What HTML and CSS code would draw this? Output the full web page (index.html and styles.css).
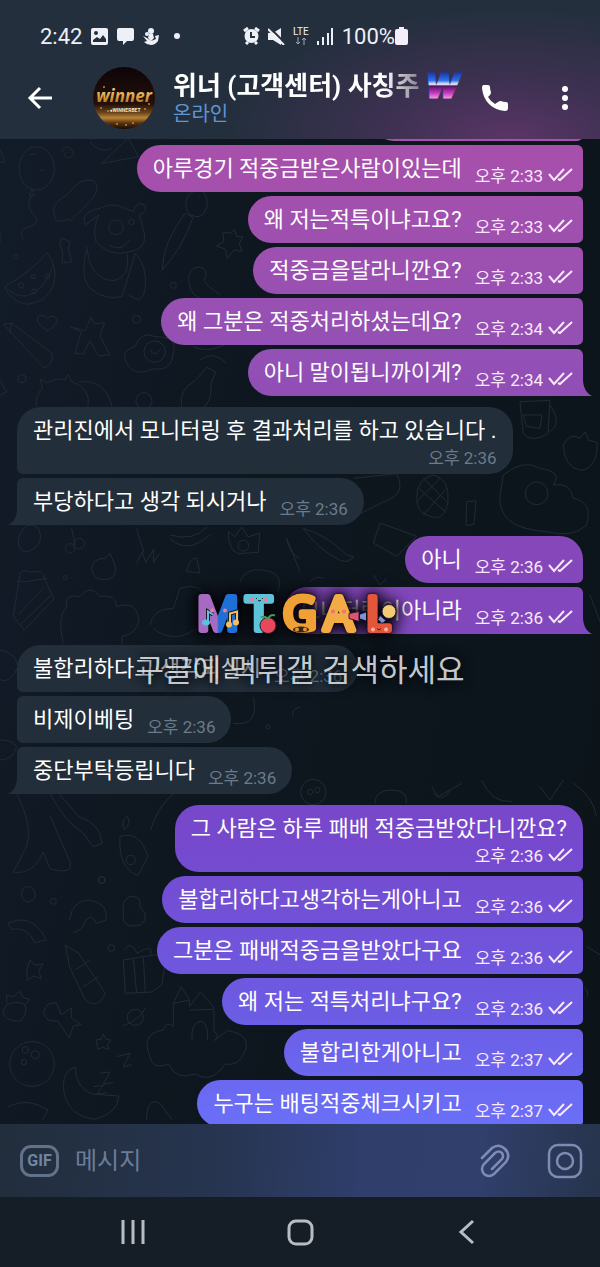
FILE: index.html
```
<!DOCTYPE html>
<html lang="ko">
<head>
  <meta charset="UTF-8" />
  <meta name="viewport" content="width=device-width, initial-scale=1" />
  <title>위너 (고객센터)</title>
  <link rel="stylesheet" href="styles.css">
</head>

<body>

<!-- Shared icons -->
<svg class="defs" width="0" height="0" aria-hidden="true">
  <symbol id="checks" viewBox="0 0 25 14">
    <path d="M1 6l5 6L16 1M10 11l2 1L24 1" fill="none" stroke="currentColor" stroke-width="2"/>
  </symbol>
</svg>

<div class="app">

  <header class="top">
    <div class="status-bar">
      <div class="status-left">
        <span class="clock">2:42</span>
        <svg width="17" height="17" viewBox="0 0 17 17"><path fill="#eef0f8" fill-rule="evenodd" d="M2 0h13q2 0 2 2v13q0 2-2 2H2q-2 0-2-2V2q0-2 2-2zM2 14h13v-3l-3-4-3 4-3-2-4 3zM5 3a2 2 0 100 4 2 2 0 000-4z"/></svg>
        <svg width="17" height="17" viewBox="0 0 17 17"><path fill="#eef0f8" d="M2 0h13q2 0 2 2v8q0 3-2 3h-5l-4 4v-4H2q-2 0-2-3V2q0-2 2-2z"/></svg>
        <svg width="16" height="17" viewBox="0 0 16 17"><g fill="#eef0f8"><circle cx="8" cy="3" r="3"/><path d="M6 6h4l1 4-3 3-3-3zM0 8l4 2 4 3 5-2-1-3 4-1-1 6q-3 4-7 4T1 14l3-1z"/><circle cx="4" cy="6" r="2"/></g></svg>
        <span class="dot"></span>
      </div>
      <div class="status-right">
        <svg width="17" height="18" viewBox="0 0 17 18"><circle cx="8.500" cy="9" r="7" fill="#eef0f8"/><path d="M1 4l4-3M16 4l-4-3M3 17l2-2M14 17l-2-2" stroke="#eef0f8" stroke-width="3"/><path d="M8 5v5h4" fill="none" stroke="#2b3040" stroke-width="2"/></svg>
        <svg width="17" height="17" viewBox="0 0 17 17"><path d="M0 5h5l8-5v17l-8-5H0z" fill="#eef0f8"/><path d="M1 -1l16 16" stroke="#2b3040" stroke-width="2"/><path d="M0 1l16 16" stroke="#eef0f8" stroke-width="2"/></svg>
        <span class="lte">LTE<svg width="12" height="8" viewBox="0 0 12 8"><path d="M3 0v7M1 5l2 2 2-2M9 8V1M7 3l2-2 2 2" fill="none" stroke="#a3a4b5"/></svg></span>
        <svg width="17" height="17" viewBox="0 0 17 17"><path d="M1 17v-4M6 17V9M11 17V5M15 17V0" stroke="#eef0f8" stroke-width="2"/></svg>
        <span class="battery">100%<svg width="13" height="18" viewBox="0 0 13 18"><path d="M4 0h5v2h2q2 0 2 2v12q0 2-2 2H2q-2 0-2-2V4q0-2 2-2h2z" fill="#f4eefb"/></svg></span>
      </div>
    </div>

    <div class="toolbar">
      <button class="icon-btn" aria-label="뒤로">
        <svg width="26" height="24" viewBox="0 0 26 24"><path d="M25 12H3M13 2L3 12l10 10" fill="none" stroke="#fff" stroke-width="3"/></svg>
      </button>
      <svg class="avatar" width="62" height="62" viewBox="0 0 62 62">
        <defs>
          <linearGradient id="gold" x1="0" y1="0" x2="0" y2="1"><stop offset="0" stop-color="#fff0b0"/><stop offset=".6" stop-color="#d99a3c"/><stop offset="1" stop-color="#8a5518"/></linearGradient>
          <linearGradient id="avatarBg" x1="0" y1="0" x2="0" y2="1"><stop offset="0" stop-color="#0d0407"/><stop offset=".6" stop-color="#24100a"/><stop offset=".74" stop-color="#6d461c"/><stop offset=".82" stop-color="#b98435"/><stop offset=".9" stop-color="#5a3512"/><stop offset="1" stop-color="#180b06"/></linearGradient>
        </defs>
        <circle cx="31" cy="31" r="31" fill="url(#avatarBg)"/>
        <g fill="#c08a3a"><circle cx="11" cy="20" r="1"/><circle cx="8" cy="41" r="1"/><circle cx="15" cy="44" r="1"/><circle cx="52" cy="42" r="1"/><circle cx="56" cy="37" r="1"/><circle cx="24" cy="57" r="1"/><circle cx="40" cy="56" r="1"/><circle cx="33" cy="58" r="1"/></g>
        <text x="31" y="35" text-anchor="middle" class="avatar-name" fill="url(#gold)">winner</text>
        <text x="32" y="45" text-anchor="middle" class="avatar-sub">●WINNERBET</text>
      </svg>
      <div class="peer">
        <div class="peer-line">
          <h1>위너 (고객센터) 사칭주</h1>
          <svg class="w-badge" width="36" height="28" viewBox="0 0 36 28">
            <defs><linearGradient id="chrome" x1="0" y1="0" x2="0" y2="28" gradientUnits="userSpaceOnUse"><stop offset="0" stop-color="#1733a8"/><stop offset=".3" stop-color="#2f6fe6"/><stop offset=".44" stop-color="#e9f3ff"/><stop offset=".5" stop-color="#571063"/><stop offset=".75" stop-color="#c43bc0"/><stop offset="1" stop-color="#ffb5ee"/></linearGradient></defs>
            <text x="0" y="25" class="w-letter" fill="url(#chrome)" stroke="url(#chrome)">W</text>
          </svg>
        </div>
        <p>온라인</p>
      </div>
      <button class="icon-btn call" aria-label="전화">
        <svg width="28" height="28" viewBox="0 0 28 28"><path d="M2 1h5q2 0 2 2 0 3 1 5 0 2-1 3l-2 2q3 5 7 7l3-2q1-1 3-1 2 1 5 1 2 0 2 2v4q0 3-3 3Q14 26 8 20T1 4q0-2 1-3z" fill="#fff"/></svg>
      </button>
      <button class="icon-btn" aria-label="더보기">
        <svg width="8" height="26" viewBox="0 0 8 26"><g fill="#fff"><circle cx="4" cy="4" r="3"/><circle cx="4" cy="13" r="3"/><circle cx="4" cy="22" r="3"/></g></svg>
      </button>
    </div>
  </header>

  <main class="chat">

    <!-- Wallpaper doodles -->
    <svg class="wallpaper" viewBox="0 139 600 985" preserveAspectRatio="xMidYMid slice" aria-hidden="true">
      <g transform="translate(0 130) scale(.3333)">
        <ellipse cx="110" cy="115" rx="53" ry="65"/><path d="M88 75q10-8 20 0M120 120q8 6 14-2M96 180l-8 16h16zM96 196q-22 30 5 58t-25 40q-18 10-8 32"/>
        <path d="M185 66q10-26 28-8t-10 26q-16-6-4-18M165 262q-20-40 40-70 36-52 76-40 24 20-6 56t-54 54l-10 12-4-6q-40 16-42-6z"/>
        <path d="M270 36q30 36 64 20M305 100l80-76 30 56q-50 10-110 20M300 235q36-20 76 0l24 10q10-34 34-20 10 20-16 30l16 60q4 40-42 50-64 18-104-30-10-40 8-80l-40 30q-14-26 16-42zM262 360q10 90 80 92 50-10 40-80M262 350q-26 100 14 130t90 20l40-130q36 40 30 100t-50 24"/>
        <circle cx="348" cy="292" r="22"/><circle cx="394" cy="276" r="8"/><path d="M330 346q30 22 60-16"/>
        <path d="M15 470Q100 420 140 368q36 40 20 100-20 50-80 55-50-10-65-53zM25 480q80 60 136-76M185 325l26 10-6 20 10 40-30 4 4-30-10-30z"/>
        <circle cx="64" cy="466" r="8"/><circle cx="100" cy="440" r="6"/><circle cx="142" cy="440" r="7"/><circle cx="102" cy="484" r="7"/><circle cx="48" cy="380" r="7"/>
        <path d="M560 240q-10-40 20-55 10-20 24-10 30 40 10 70-10 24-42 10zM555 250l24 12q-30 90-92 158 0-80 68-170zM690 310l14-12 6 22 18 0-10 22 8 22-24-4-20 26-6-28-26-10 22-14-4-28zM662 495q-40-26-50-44 14-20-4-38-30-10-42 26-2 50 34 66"/>
        <path d="M10 582l26-2 120 90q6 34-24 44zM36 580l-8 30M140 600q-36-20-26-40 14-10 28 4 20-14 30 6-4 20-32 34zM210 590l34 16-20 64 26 2 20-40 26 46 34-4-30-56 14-40-30 4-10-20-20 40z"/>
        <path d="M375 690q-10-30 30-40 20-50 60-30 70 0 55 46-4 60-60 50-60 30-85-26z"/><circle cx="464" cy="665" r="32"/><path d="M450 660q12 24 32-2"/>
        <path d="M108 830q0-40 20-56l-8-26 24 10q30-16 50-8l10-16 10 20q60 20 50 76M236 756q80-10 100 74M545 830q-10-50 40-78l36-40 26 14-14 34q4 60-30 78M580 650q40 20 90-4M600 690q40-30 80 10"/>
        <circle cx="410" cy="568" r="12"/><circle cx="66" cy="746" r="12"/><circle cx="520" cy="466" r="9"/><circle cx="432" cy="812" r="24"/><path d="M0 60l14 36H0M0 310v30M0 750l20 36-20 10"/>
      </g>
      <g transform="translate(0 395) scale(.3333)">
        <path d="M60 540q0-20 34-8 40-10 40 20l28 60-90 94-32-44zM50 560l30 0 60-10M54 660l76-80M64 686l90-86M190 745q-20-80 10-110-10-40 40-30 30-40 60 0 50-10 50 30 60-20 66 40-4 40-50 50v40"/>
        <path d="M275 520q4-30 40-30l16-14 8 20q20 40-10 56-50 10-54-32zM56 430q20-60 60-30 20 50-30 70-36 0-30-40zM215 400l10 50M410 400l22 74M410 506l16-34 12 30 24-40-2 40 18-26M510 420q70 20 110-24M510 430q50 50 120-10M685 410l20 16 20-30 20 30 34-12-4 58-60 4q-30-10-30-66zM860 430l40 100M860 430q10 50 40 60"/>
        <circle cx="210" cy="460" r="14"/><circle cx="238" cy="446" r="16"/><circle cx="196" cy="548" r="6"/><circle cx="730" cy="452" r="16"/><path d="M560 530q10-46 30-40l10 44zM450 690q10-50 70-50l20-60q60-20 80 30M460 700q60 50 130 0M720 560q20-50 90-30 40 10 24 60"/>
      </g>
      <g transform="translate(300 395) scale(.3333)">
        <path d="M660 20l90-4-6 100q-50 30-74 0zM670 60l56 0-6 40-40-6zM750 30q40 60-4 80M790 150q20-40 50-20l16-20 10 26 26 6q0 80-50 84-50-10-52-76zM350 310q0-60 50-70 50 10 44 80-10 60-54 44-40-10-40-54zM356 280l80 70M370 250l70 70M440 280l-70 80M420 250l-70 70M500 320l28-2-6 70-24 4z"/>
        <circle cx="710" cy="295" r="34"/><path d="M610 240q60-50 110-20 70 10 40 50 50-10 60 40 60 10 40 80-40 40-120 20-150-10-140-110zM240 384l110 40-60 60-70-40zM10 400q70 20 130 80l22 6-22 14-20-4Q50 460 10 400M160 250l130-14q30 60-30 80l-80 40"/>
        <path d="M220 540l20 30 20-20M870 600l30 80M30 560q20-20 40-10"/>
      </g>
      <g transform="translate(0 630) scale(.3333)">
        <path d="M0 60q50 10 54 50-20 50-54 40M50 490q50 100 30 160l-40 76q60 10 90-60l20 50q70 20 60-20l-60-140M150 490q40 80 100 120l30 40 26-10q-4-60-70-80l-60-70M360 620q60-20 84 60l-30 56q-60-20-54-116zM372 600q-10-30 10-40 14 20-10 40M452 600q20-70 70-110M700 280q80 10 60-80M880 260q-10-20 20-30M0 330q40 0 50 20-10 40-50 40"/>
        <circle cx="306" cy="750" r="10"/><circle cx="392" cy="690" r="14"/><circle cx="804" cy="290" r="6"/>
      </g>
      <g transform="translate(300 780) scale(.3333)">
        <circle cx="40" cy="36" r="38"/><circle cx="30" cy="36" r="8"/><circle cx="52" cy="30" r="8"/><path d="M225 70q0-40 50-40 50 0 44 40M395 20l20 30 70-40M400 40q30 30 50-10M545 0q30 70 90 64M720 20l30 40 40-60M820 10q60 40 70 100M860 500l40 24M850 620q20 20 10 30"/>
      </g>
      <g transform="translate(0 870) scale(.3333)">
        <path d="M106 72q-10-30-34-20-20 30 10 44 30-4 22-30M208 150q10-60 60-60 60 10 50 60l-30 10q-10-30-30-10-8 30-38 38M24 160q60-30 104 30l10 20-34 8q-20-50-70-40zM370 130q-6-40 20-50 36-4 30 30 30 30 4 54-60 16-54-34zM196 226l40 24 80 120q-20 50-60 20l-46-96zM226 300l44-30M250 350l46-30"/>
        <path d="M370 270l96-16 30 20-10 70-30 22-80 4zM400 264l10 106M430 262l6 106M372 240q20-30 40 10 50-30 40 4M80 300l10-30 14 16 26-4-14 20 8 24-22-8-20 12zM10 420q10-30 60-20 20 20-8 54-56 0-52-34zM20 400l0-24 20 4 20-16 10 20 18 4-14 20M130 430q10-40 40-30l14 34 30-20 0 30 30 20-24 4-12 36-34-50-30-4z"/>
        <circle cx="305" cy="30" r="10"/><circle cx="160" cy="94" r="9"/><circle cx="334" cy="234" r="10"/><circle cx="96" cy="582" r="67"/><circle cx="76" cy="540" r="10"/><circle cx="106" cy="554" r="12"/><circle cx="72" cy="576" r="8"/><circle cx="406" cy="442" r="24"/><path d="M370 468q50-20 66-54M288 510l16-2 6-16 8 16 14 2-10 14 4 14-18-6-14 6z"/>
        <path d="M450 560q-30-70 40-80 10-30 30-10l0-70 24-50 24 40v20l34-44 40 46v70q20 20 0 30l40-30q70 10 54 60-20 50-60 40-40 60-90 30-60 20-80-30-50 20-56-22zM520 400l48-10M570 420l70-2M576 510q-4-56 30-56 20 10 16 56"/>
        <path d="M190 650q0-50 36-58 0 60 50 80l80 6q0 50-70 70-90-10-96-98zM280 650l30-4-20 26 30-4M300 610l30-4-20 36 30-4M350 560l40-10-20 40 26-6M24 710q60-30 120 10l-16 30M440 750q0-70 40-50l36 50"/>
      </g>
    </svg>

    <div class="messages">
      <div class="bubble out stub"></div>
      <div class="bubble out"><p>아루경기 적중금받은사람이있는데</p><time>오후 2:33</time><svg class="ticks"><use href="#checks"/></svg></div>
      <div class="bubble out"><p>왜 저는적특이냐고요?</p><time>오후 2:33</time><svg class="ticks"><use href="#checks"/></svg></div>
      <div class="bubble out"><p>적중금을달라니깐요?</p><time>오후 2:33</time><svg class="ticks"><use href="#checks"/></svg></div>
      <div class="bubble out"><p>왜 그분은 적중처리하셨는데요?</p><time>오후 2:34</time><svg class="ticks"><use href="#checks"/></svg></div>
      <div class="bubble out last"><p>아니 말이됩니까이게?</p><time>오후 2:34</time><svg class="ticks"><use href="#checks"/></svg></div>

      <div class="bubble in first wide"><p>관리진에서 모니터링 후 결과처리를 하고 있습니다 .</p><time>오후 2:36</time></div>
      <div class="bubble in last"><p>부당하다고 생각 되시거나</p><time>오후 2:36</time></div>

      <div class="bubble out first"><p>아니</p><time>오후 2:36</time><svg class="ticks"><use href="#checks"/></svg></div>
      <div class="bubble out last"><p>모니터링이아니라</p><time>오후 2:36</time><svg class="ticks"><use href="#checks"/></svg></div>

      <div class="bubble in first"><p>불합리하다고 생각되실시</p><time>오후 2:36</time></div>
      <div class="bubble in"><p>비제이베팅</p><time>오후 2:36</time></div>
      <div class="bubble in last"><p>중단부탁등립니다</p><time>오후 2:36</time></div>

      <div class="bubble out first wide"><p>그 사람은 하루 패배 적중금받았다니깐요?</p><time>오후 2:36</time><svg class="ticks"><use href="#checks"/></svg></div>
      <div class="bubble out"><p>불합리하다고생각하는게아니고</p><time>오후 2:36</time><svg class="ticks"><use href="#checks"/></svg></div>
      <div class="bubble out"><p>그분은 패배적중금을받았다구요</p><time>오후 2:36</time><svg class="ticks"><use href="#checks"/></svg></div>
      <div class="bubble out"><p>왜 저는 적특처리냐구요?</p><time>오후 2:36</time><svg class="ticks"><use href="#checks"/></svg></div>
      <div class="bubble out"><p>불합리한게아니고</p><time>오후 2:37</time><svg class="ticks"><use href="#checks"/></svg></div>
      <div class="bubble out"><p>누구는 배팅적중체크시키고</p><time>오후 2:37</time><svg class="ticks"><use href="#checks"/></svg></div>
    </div>
  </main>

  <form class="composer">
    <button type="button" class="gif">GIF</button>
    <input type="text" placeholder="메시지" aria-label="메시지">
    <button type="button" class="icon-btn" aria-label="파일 첨부">
      <svg width="30" height="34" viewBox="0 0 30 34"><path d="M2 14L12 4q7-5 13 1 6 6 1 13L14 30q-5 4-10 0-4-5 0-10L15 9q4-3 7 0 2 3 0 6L12 25" fill="none" stroke="#7d8bb5" stroke-width="2.500" stroke-linecap="round"/></svg>
    </button>
    <button type="button" class="icon-btn" aria-label="카메라">
      <svg width="36" height="36" viewBox="0 0 36 36"><g fill="none" stroke="#7d8bb5" stroke-width="2.500"><rect x="2" y="2" width="32" height="32" rx="9"/><circle cx="18" cy="18" r="8"/></g></svg>
    </button>
  </form>

  <nav class="nav-bar">
    <button class="icon-btn" aria-label="최근 앱"><svg width="26" height="26" viewBox="0 0 26 26"><path d="M3 1v24M13 1v24M23 1v24" stroke="#b9bdc2" stroke-width="3"/></svg></button>
    <button class="icon-btn" aria-label="홈"><svg width="28" height="28" viewBox="0 0 28 28"><rect x="3" y="3" width="23" height="23" rx="7" fill="none" stroke="#b9bdc2" stroke-width="3"/></svg></button>
    <button class="icon-btn" aria-label="뒤로"><svg width="26" height="26" viewBox="0 0 26 26"><path d="M19 2L7 13l12 11" fill="none" stroke="#b9bdc2" stroke-width="3"/></svg></button>
  </nav>

  <!-- Watermark -->
  <div class="watermark">
    <svg class="wm-logo" width="210" height="54" viewBox="0 0 210 54">
      <defs><linearGradient id="mFill"><stop offset=".48" stop-color="#a66bc0"/><stop offset=".52" stop-color="#1e6fd6"/></linearGradient></defs>
      <g class="wm-letters">
        <text x="2" y="43" fill="url(#mFill)" stroke="url(#mFill)">M</text>
        <text x="51" y="43" fill="#5cc3d8" stroke="#5cc3d8">T</text>
        <text x="88" y="43" fill="#f0a136" stroke="#f0a136">G</text>
        <text x="129" y="43" fill="#f3ab45" stroke="#f3ab45">A</text>
        <text x="171" y="43" fill="#e3563c" stroke="#e3563c">L</text>
      </g>
      <path d="M13 36V25l5 3M35 38V27l7-2v11" fill="none" stroke="#16202b" stroke-width="4"/>
      <path d="M13 36V25l5 3" fill="none" stroke="#58c4dc" stroke-width="2"/><ellipse cx="11" cy="36" rx="4" ry="3" fill="#58c4dc"/>
      <path d="M35 37V27l7-2v10" fill="none" stroke="#f2c063" stroke-width="2"/><circle cx="34" cy="38" r="3" fill="#f2c063"/><circle cx="41" cy="36" r="3" fill="#f2c063"/>
      <circle cx="17" cy="24" r="2" fill="#f27a9c"/><circle cx="30" cy="24" r="2" fill="#f27a9c"/>
      <circle cx="57" cy="13" r="2" fill="#f27a9c"/><circle cx="71" cy="13" r="2" fill="#f27a9c"/><path d="M61 12h1M67 12h1M63 14q1 1 3 0" stroke="#26323c"/>
      <circle cx="73" cy="39" r="8" fill="#e9485c" stroke="#26202b"/><path d="M73 32q-4-3-7-1M73 32q3-5 7-3" stroke="#3f9b57" stroke-width="2" fill="none"/>
      <ellipse cx="106" cy="43" rx="8" ry="3" fill="#33271f"/><circle cx="102" cy="43" r="2" fill="#e09536"/><circle cx="110" cy="43" r="2" fill="#e09536"/>
      <circle cx="138" cy="25" r="2" fill="#ef6f7b"/><circle cx="149" cy="25" r="2" fill="#ef6f7b"/>
      <path d="M154 27l10-2v10l-10-3z" fill="#e2536c" stroke="#2b1c3a"/><path d="M165 28l6-2v8l-6-2z" fill="#8190dc"/>
      <circle cx="194" cy="25" r="7" fill="#f4ca72" stroke="#2b1c3a"/><path d="M185 29l6 5-4 3-4-4z" fill="#7f93cf" stroke="#2b1c3a"/>
      <circle cx="178" cy="43" r="2" fill="#ffb3a4"/><circle cx="191" cy="43" r="2" fill="#ffb3a4"/><path d="M182 42q2 3 4 0" stroke="#4a1a18" fill="none"/>
    </svg>
    <p>구글에 먹튀갤 검색하세요</p>
  </div>

</div>

</body>
</html>
```

FILE: styles.css
```
* {
  box-sizing: border-box;
}

body {
  margin: 0;
  background: #0e161d;
  color: #fff;
  font-family: Roboto, "Noto Sans CJK KR", sans-serif;
}

h1, p {
  margin: 0;
}

svg {
  display: block;
  flex: none;
}

.defs {
  position: absolute;
}

.app {
  position: relative;
  display: flex;
  flex-direction: column;
  height: 100vh;
  overflow: hidden;
}

button {
  background: none;
  border: none;
  padding: 0;
  color: inherit;
  font-family: inherit;
  cursor: pointer;
}

.icon-btn {
  display: flex;
  align-items: center;
  justify-content: center;
  flex: none;
}

/* --- HEADER --- */
.top {
  flex: none;
  padding-top: 16px;
  background:
    radial-gradient(ellipse 280px 130px at 85% 100%, #5a3567 0%, rgba(78, 50, 94, 0.6) 45%, rgba(36, 46, 61, 0) 100%),
    #242f3e;
}

.status-bar {
  display: flex;
  align-items: center;
  height: 40px;
  padding-left: 40px;
  font-size: 22px;
  color: #eef0f8;
}

.status-left,
.status-right {
  display: flex;
  align-items: center;
  gap: 9px;
}

.status-left {
  width: 203px;
}

.status-right {
  gap: 8px;
}

.dot {
  width: 6px;
  height: 6px;
  margin-left: 6px;
  border-radius: 50%;
  background: #eef0f8;
}

.lte {
  display: flex;
  flex-direction: column;
  align-items: center;
  font-size: 10px;
  line-height: 10px;
}

.battery {
  display: flex;
  align-items: center;
}

.toolbar {
  display: flex;
  align-items: center;
  height: 83px;
  padding: 0 31px 0 27px;
}

.avatar {
  margin: 0 18px 0 40px;
}

.avatar-name {
  font: italic 700 17px "Open Sans", sans-serif;
}

.avatar-sub {
  font: 700 5px Roboto, sans-serif;
  fill: #f3e2c0;
}

.peer {
  flex: 1;
  min-width: 0;
}

.peer-line {
  display: flex;
  align-items: center;
  gap: 8px;
}

.peer h1 {
  flex: none;
  font-size: 26px;
  line-height: 32px;
  font-weight: 700;
  white-space: nowrap;
  -webkit-mask-image: linear-gradient(to left, rgba(0, 0, 0, 0.4), #000 36px);
  mask-image: linear-gradient(to left, rgba(0, 0, 0, 0.4), #000 36px);
}

.w-letter {
  font: italic 700 33px "Liberation Sans", sans-serif;
  stroke-width: 3px;
}

.w-badge {
  overflow: visible;
}

.peer p {
  font-size: 20px;
  line-height: 24px;
  color: #5f95d3;
}

.call {
  margin: 0 52px 0 18px;
}

/* --- CHAT --- */
.chat {
  position: relative;
  flex: 1;
  min-height: 0;
  display: flex;
  flex-direction: column;
  justify-content: flex-end;
  overflow: hidden;
  background: linear-gradient(100deg, #121b28, #0e171f 40%, #0c141a);
}

.wallpaper {
  position: absolute;
  inset: 0;
  width: 100%;
  height: 100%;
  fill: none;
  stroke: #202b36;
  stroke-width: 3px;
}

.messages {
  position: relative;
  display: flex;
  flex-direction: column;
  gap: 4px;
  padding: 0 17px;
  margin-bottom: -3px;
}

.bubble {
  position: relative;
  display: flex;
  align-items: flex-end;
  min-height: 47px;
  max-width: 90%;
  padding: 10px 16px 6px;
}

.bubble p {
  margin: 0 13px 3px 0;
  font-size: 22px;
  line-height: 28px;
}

.bubble time {
  font-size: 17px;
  line-height: 20px;
}

.in {
  align-self: flex-start;
  border-radius: 6px 24px 24px 6px;
  background: #222e3a;
}

.in time {
  color: #6b7b8b;
}

.out {
  align-self: flex-end;
  padding-right: 10px;
  border-radius: 24px 6px 6px 24px;
  background: linear-gradient(#b055a6 0, #a650ac 13%, #9350b5 28%, #8447ba 45%, #7648cc 66%, #6c5ce4 80%, #6a72fb 90%) fixed;
}

.out time {
  color: #fbe9fd;
}

.ticks {
  width: 25px;
  height: 14px;
  margin: 0 0 4px 5px;
  color: #fbe9fd;
}

.stub {
  width: 212px;
}

.in.first {
  border-top-left-radius: 24px;
}

.out.first {
  border-top-right-radius: 24px;
}

.last + .bubble {
  margin-top: 7px;
}

.in.last {
  border-bottom-left-radius: 0;
}

.out.last {
  border-bottom-right-radius: 0;
}

/* bubble tail */
.last::after {
  content: "";
  position: absolute;
  bottom: 0;
  width: 9px;
  height: 17px;
  background: inherit;
}

.out.last::after {
  left: 100%;
  clip-path: path("M0 0C0 8 3 14 9 17H0z");
}

.in.last::after {
  right: 100%;
  clip-path: path("M9 0C9 8 6 14 0 17H9z");
}

/* time goes on its own line */
.wide {
  display: grid;
  grid-template-columns: 1fr auto auto;
}

.wide p {
  grid-column: 1 / -1;
  margin-right: 0;
}

.wide time {
  grid-column: 2;
}

.out.wide p {
  margin-right: 6px;
}

/* --- COMPOSER --- */
.composer {
  display: flex;
  align-items: center;
  flex: none;
  height: 73px;
  padding: 0 17px 0 20px;
  background: linear-gradient(95deg, #222e3c, #26344f 35%, #2f3e6a 60%, #303f6b 80%, #27344c);
}

.gif {
  flex: none;
  width: 39px;
  height: 32px;
  border: 3px solid #62728a;
  border-radius: 11px;
  color: #7384a0;
  font-size: 16px;
  font-weight: 700;
}

.composer input {
  flex: 1;
  min-width: 0;
  margin: 0 16px;
  padding: 0;
  border: none;
  outline: none;
  background: none;
  color: #fff;
  font-family: inherit;
  font-size: 24px;
}

.composer input::placeholder {
  color: #6c7c96;
}

.composer .icon-btn + .icon-btn {
  margin-left: 37px;
}

/* --- SYSTEM NAV --- */
.nav-bar {
  display: flex;
  align-items: center;
  justify-content: space-between;
  flex: none;
  height: 70px;
  padding: 0 20%;
  background: #151e26;
}

/* --- WATERMARK --- */
.watermark {
  position: absolute;
  top: 50%;
  left: 50%;
  display: flex;
  flex-direction: column;
  align-items: center;
  width: 340px;
  padding-top: 9px;
  transform: translate(-50%, -50%);
  pointer-events: none;
}

.wm-logo {
  overflow: visible;
  filter: drop-shadow(0 0 1px #050409) drop-shadow(0 0 7px #050409) drop-shadow(0 0 8px rgba(5, 4, 9, 0.8));
}

.wm-letters {
  font: 400 46px "Noto Sans", sans-serif;
  stroke-width: 6px;
  stroke-linejoin: round;
}

.watermark p {
  margin-top: 10px;
  font-size: 31px;
  line-height: 40px;
  font-weight: 400;
  white-space: nowrap;
  color: rgba(222, 225, 230, 0.9);
  text-shadow: 0 0 8px #070a0e, 0 0 14px #070a0e;
}
```
